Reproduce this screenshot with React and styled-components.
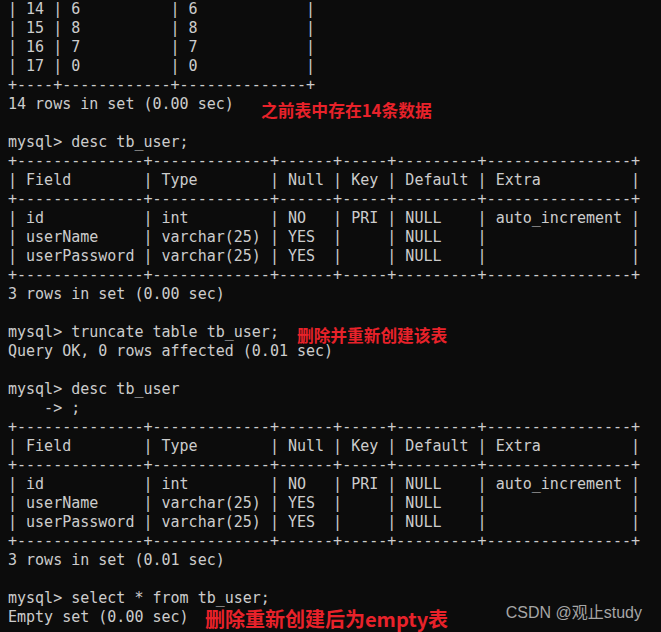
import React from "react";
import styled, { createGlobalStyle } from "styled-components";

const Global = createGlobalStyle`
  html, body { margin: 0; padding: 0; background: #0c0c0c; }
  #root { width: 661px; height: 632px; }
`;

const Terminal = styled.div`
  position: relative;
  width: 661px;
  height: 632px;
  overflow: hidden;
  background: #0c0c0c;
  box-sizing: border-box;
  padding-left: 8px;
`;

const Output = styled.pre`
  margin: 0;
  font-family: "DejaVu Sans Mono", "Liberation Mono", monospace;
  font-size: 15px;
  line-height: 19px;
  color: #cccccc;
  white-space: pre;
`;

const Line = styled.div`
  height: 19px;
`;

const Note = styled.div`
  position: absolute;
  left: ${(p) => p.$x}px;
  top: ${(p) => p.$y}px;
  font-family: "Noto Sans CJK SC", "Noto Sans", sans-serif;
  font-weight: 700;
  font-size: ${(p) => p.$size}px;
  line-height: 1;
  color: #e8222a;
  white-space: nowrap;
`;

const Watermark = styled.div`
  position: absolute;
  right: 19px;
  top: 604px;
  font-family: "Liberation Sans", "Noto Sans CJK SC", sans-serif;
  font-size: 16px;
  line-height: 18px;
  color: #a6a6a6;
  white-space: nowrap;
`;

const pad = (s, n) => s + " ".repeat(Math.max(0, n - s.length));
const border = (w) => "+" + w.map((n) => "-".repeat(n + 2)).join("+") + "+";
const row = (cells, w) => "| " + cells.map((c, i) => pad(c, w[i])).join(" | ") + " |";

const topW = [2, 10, 12];
const descW = [12, 11, 4, 3, 7, 14];
const descTable = [
  border(descW),
  row(["Field", "Type", "Null", "Key", "Default", "Extra"], descW),
  border(descW),
  row(["id", "int", "NO", "PRI", "NULL", "auto_increment"], descW),
  row(["userName", "varchar(25)", "YES", "", "NULL", ""], descW),
  row(["userPassword", "varchar(25)", "YES", "", "NULL", ""], descW),
  border(descW),
];

const lines = [
  row(["14", "6", "6"], topW),
  row(["15", "8", "8"], topW),
  row(["16", "7", "7"], topW),
  row(["17", "0", "0"], topW),
  border(topW),
  "14 rows in set (0.00 sec)",
  "",
  "mysql> desc tb_user;",
  ...descTable,
  "3 rows in set (0.00 sec)",
  "",
  "mysql> truncate table tb_user;",
  "Query OK, 0 rows affected (0.01 sec)",
  "",
  "mysql> desc tb_user",
  "    -> ;",
  ...descTable,
  "3 rows in set (0.01 sec)",
  "",
  "mysql> select * from tb_user;",
  "Empty set (0.00 sec)",
];

export default function App() {
  return (
    <>
      <Global />
      <Terminal>
        <Output>
          {lines.map((l, i) => (
            <Line key={i}>{l}</Line>
          ))}
        </Output>
        <Note $x={261} $y={102} $size={16.8}>之前表中存在14条数据</Note>
        <Note $x={297} $y={327} $size={16.7}>删除并重新创建该表</Note>
        <Note $x={205} $y={609} $size={20}>删除重新创建后为empty表</Note>
        <Watermark>CSDN @观止study</Watermark>
      </Terminal>
    </>
  );
}
